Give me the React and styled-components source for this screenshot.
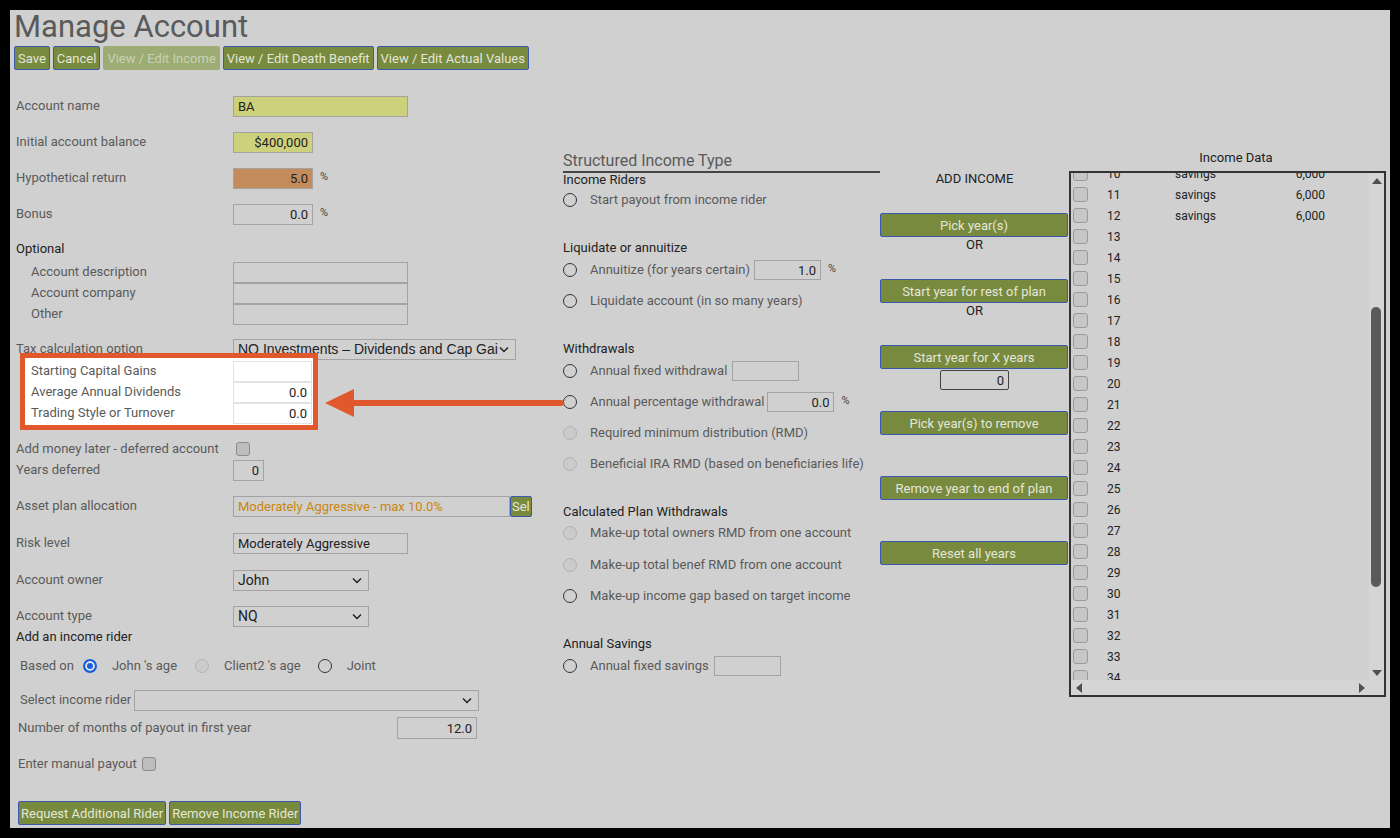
import React from 'react';
import styled, { createGlobalStyle } from 'styled-components';

const GlobalStyle = createGlobalStyle`
  html, body {
    margin: 0;
    padding: 0;
    background: #000;
  }
  body {
    font-family: Roboto, "Noto Sans", sans-serif;
  }
`;

const Page = styled.div`
  position: relative;
  box-sizing: border-box;
  margin: 10px;
  width: 1380px;
  height: 818px;
  padding: 0 0 0 4px;
  background: #d0d0d0;
  color: #5a5a5a;
  font-size: 13px;
`;

const Title = styled.h1`
  margin: 0;
  font-size: 31px;
  line-height: 34px;
  font-weight: 400;
  color: #5a5a5a;
`;

const Toolbar = styled.div`
  display: flex;
  gap: 3px;
  margin-top: 2px;
  height: 24px;
`;

const Button = styled.button`
  box-sizing: border-box;
  height: 24px;
  padding: 0 3px;
  border: 1.5px solid ${(p) => (p.disabled ? 'transparent' : '#3b58ad')};
  border-radius: 2px;
  background: ${(p) => (p.disabled ? '#9dac74' : '#788a3e')};
  color: ${(p) => (p.disabled ? '#c9d1b3' : '#e4e6da')};
  font-family: Roboto, sans-serif;
  font-size: 13px;
  white-space: nowrap;
  cursor: pointer;
`;

const SelButton = styled(Button)`
  height: 21px;
  padding: 0 1px;
`;

const Columns = styled.div`
  display: flex;
  margin: 28px 0 0 2px;
`;

const LeftCol = styled.div`
  width: 547px;
  flex-shrink: 0;
`;

const MidCol = styled.div`
  width: 317px;
  flex-shrink: 0;
  padding-top: 53px;
`;

const ActionCol = styled.div`
  width: 189px;
  flex-shrink: 0;
  padding-top: 73px;
  display: flex;
  flex-direction: column;
  align-items: center;
  color: #222;
`;

const DataCol = styled.div`
  width: 317px;
  flex-shrink: 0;
  padding-top: 52px;
`;

/* one text line of the form; the gap is the distance to the next line */
const Line = styled.div`
  display: flex;
  align-items: center;
  height: 16px;
  line-height: 16px;
  margin-bottom: ${(p) => p.$gap ?? 20}px;
  padding-left: ${(p) => p.$pad ?? 0}px;
  white-space: nowrap;
`;

const Label = styled.span`
  flex-shrink: 0;
  width: ${(p) => (p.$w ? `${p.$w}px` : 'auto')};
  padding-left: ${(p) => (p.$indent ? 15 : 0)}px;
  box-sizing: border-box;
  margin-right: ${(p) => p.$mr ?? 0}px;
  color: ${(p) => (p.$dark ? '#222' : '#5a5a5a')};
`;

const TextBox = styled.input`
  box-sizing: border-box;
  flex-shrink: 0;
  width: ${(p) => p.$w}px;
  height: ${(p) => p.$h ?? 21}px;
  margin-left: ${(p) => p.$ml ?? 0}px;
  padding: 0 4px;
  border: 1px solid ${(p) => p.$border ?? '#a3a3a3'};
  border-radius: ${(p) => (p.$round ? 2 : 0)}px;
  background: ${(p) => p.$bg ?? 'transparent'};
  color: ${(p) => p.$color ?? '#222'};
  font-family: Roboto, sans-serif;
  font-size: 13px;
  text-align: ${(p) => p.$align ?? 'left'};
  outline: none;
`;

const Pct = styled.span`
  align-self: flex-start;
  margin: -1px 0 0 7px;
  font-size: 11px;
  color: #444;
`;

const SelectBox = styled.div`
  box-sizing: border-box;
  display: flex;
  align-items: center;
  flex-shrink: 0;
  width: ${(p) => p.$w}px;
  height: 21px;
  margin-left: ${(p) => p.$ml ?? 0}px;
  padding: 0 6px 0 4px;
  border: 1px solid #a3a3a3;
  color: #222;
  font-family: ${(p) => (p.$arial ? '"Liberation Sans", Arial, sans-serif' : 'Roboto, sans-serif')};
  font-size: 14px;
`;

const SelectText = styled.span`
  flex: 1;
  white-space: nowrap;
`;

const Chevron = () => (
  <svg width="10" height="7" viewBox="0 0 10 7">
    <path d="M1 1.5 L5 5.5 L9 1.5" fill="none" stroke="#222" strokeWidth="1.5" />
  </svg>
);

const Check = styled.span`
  box-sizing: border-box;
  display: inline-block;
  flex-shrink: 0;
  width: 14px;
  height: 14px;
  margin-left: ${(p) => p.$ml ?? 0}px;
  border: 1px solid #8a8a8a;
  border-radius: 3px;
  background: #bdbdbd;
`;

const Radio = styled.span`
  box-sizing: border-box;
  display: inline-block;
  flex-shrink: 0;
  width: 14px;
  height: 14px;
  margin-right: ${(p) => p.$mr ?? 13}px;
  border-radius: 50%;
  border: ${(p) =>
    p.$checked ? '2px solid #1a5ee0' : p.$off ? '1px solid #b3b3b3' : '1.5px solid #333'};
  background: ${(p) => (p.$checked ? '#1a5ee0' : p.$off ? '#cbcbcb' : 'transparent')};
  box-shadow: ${(p) => (p.$checked ? 'inset 0 0 0 2px #e6e6e6' : 'none')};
`;

const Highlight = styled.div`
  position: relative;
  box-sizing: border-box;
  width: 298px;
  margin: 0 0 11px 4px;
  padding: 5px 1px 4px 6px;
  border: 5px solid #e0582b;
  background: #fff;
`;

const HighlightLine = styled(Line)`
  &:last-child {
    margin-bottom: 0;
  }
`;

const OptionText = styled.span`
  margin-right: ${(p) => p.$mr ?? 0}px;
  color: #5a5a5a;
`;

const BottomBar = styled.div`
  display: flex;
  gap: 3px;
  padding-left: 2px;
`;

const BottomButton = styled(Button)`
  padding: 0 2px;
`;

const SectionTitle = styled.div`
  font-size: 16px;
  line-height: 20px;
  color: #5a5a5a;
  border-bottom: 2px solid #444;
  margin-bottom: -1px;
`;

const ActionText = styled.div`
  line-height: 16px;
  margin-bottom: ${(p) => p.$gap ?? 0}px;
`;

const ActionButton = styled(Button)`
  width: 188px;
  align-self: flex-start;
  margin-bottom: ${(p) => p.$gap ?? 0}px;
`;

const YearsBox = styled(TextBox)`
  margin-bottom: 21px;
`;

const DataTitle = styled.div`
  line-height: 16px;
  margin-bottom: 5px;
  padding-left: 17px;
  text-align: center;
  color: #222;
`;

const DataBox = styled.div`
  box-sizing: border-box;
  display: grid;
  grid-template-columns: 1fr 15px;
  grid-template-rows: 1fr 15px;
  height: 526px;
  border: 2px solid #333;
`;

const Viewport = styled.div`
  overflow: hidden;
`;

const RowList = styled.div`
  margin-top: -10px;
`;

const DataRow = styled.div`
  display: grid;
  grid-template-columns: 36px 68px 90px 60px;
  align-items: center;
  height: 21px;
  font-size: 12px;
  color: #222;
`;

const RowCheck = styled(Check)`
  width: 15px;
  height: 15px;
  margin-left: 2px;
  border-color: #9a9a9a;
  background: #c6c6c6;
`;

const Amount = styled.span`
  text-align: right;
`;

const VScroll = styled.div`
  display: flex;
  flex-direction: column;
  background: #d5d5d5;
`;

const HScroll = styled.div`
  display: flex;
  background: #d5d5d5;
`;

const Corner = styled.div`
  background: #d5d5d5;
`;

const ScrollArrow = styled.div`
  display: flex;
  align-items: center;
  justify-content: center;
  width: 15px;
  height: 15px;
  flex-shrink: 0;
`;

const Track = styled.div`
  flex: 1;
`;

const Thumb = styled.div`
  width: 10px;
  height: ${(p) => p.$len}px;
  margin: ${(p) => p.$at}px 0 0 2px;
  border-radius: 5px;
  background: #5a5a5a;
`;

const Tri = ({ dir }) => {
  const pts = {
    up: '0,7 5,1 10,7',
    down: '0,1 5,7 10,1',
    left: '7,0 1,5 7,10',
    right: '1,0 7,5 1,10',
  }[dir];
  const vertical = dir === 'up' || dir === 'down';
  return (
    <svg width={vertical ? 10 : 8} height={vertical ? 8 : 10} viewBox={vertical ? '0 0 10 8' : '0 0 8 10'}>
      <polygon points={pts} fill="#505050" />
    </svg>
  );
};

const Arrow = styled.svg`
  position: absolute;
  left: 315px;
  top: 368px;
`;

const incomeRows = Array.from({ length: 26 }, (_, i) => {
  const year = 10 + i;
  return { year, kind: year <= 12 ? 'savings' : '', amount: year <= 12 ? '6,000' : '' };
});

const App = () => {
  return (
    <>
      <GlobalStyle />
      <Page>
        <Title>Manage Account</Title>
        <Toolbar>
          <Button>Save</Button>
          <Button>Cancel</Button>
          <Button disabled>View / Edit Income</Button>
          <Button>View / Edit Death Benefit</Button>
          <Button>View / Edit Actual Values</Button>
        </Toolbar>

        <Columns>
          <LeftCol>
            <Line $gap={20}>
              <Label $w={217}>Account name</Label>
              <TextBox $w={175} $bg="#cdd17b" defaultValue="BA" readOnly />
            </Line>
            <Line $gap={20}>
              <Label $w={217}>Initial account balance</Label>
              <TextBox $w={80} $bg="#cdd17b" $align="right" defaultValue="$400,000" readOnly />
            </Line>
            <Line $gap={20}>
              <Label $w={217}>Hypothetical return</Label>
              <TextBox $w={80} $bg="#c48b5b" $align="right" defaultValue="5.0" readOnly />
              <Pct>%</Pct>
            </Line>
            <Line $gap={19}>
              <Label $w={217}>Bonus</Label>
              <TextBox $w={80} $align="right" defaultValue="0.0" readOnly />
              <Pct>%</Pct>
            </Line>
            <Line $gap={7}>
              <Label $dark>Optional</Label>
            </Line>
            <Line $gap={5}>
              <Label $w={217} $indent>Account description</Label>
              <TextBox $w={175} readOnly />
            </Line>
            <Line $gap={5}>
              <Label $w={217} $indent>Account company</Label>
              <TextBox $w={175} readOnly />
            </Line>
            <Line $gap={19}>
              <Label $w={217} $indent>Other</Label>
              <TextBox $w={175} readOnly />
            </Line>
            <Line $gap={-4}>
              <Label $w={217}>Tax calculation option</Label>
              <SelectBox $w={283} $arial>
                <SelectText>NQ Investments – Dividends and Cap Gai</SelectText>
                <Chevron />
              </SelectBox>
            </Line>
            <Highlight>
              <HighlightLine $gap={5}>
                <Label $w={202}>Starting Capital Gains</Label>
                <TextBox $w={79} $bg="#fff" $border="#e2e2e2" readOnly />
              </HighlightLine>
              <HighlightLine $gap={5}>
                <Label $w={202}>Average Annual Dividends</Label>
                <TextBox $w={79} $bg="#fff" $border="#e2e2e2" $align="right" defaultValue="0.0" readOnly />
              </HighlightLine>
              <HighlightLine>
                <Label $w={202}>Trading Style or Turnover</Label>
                <TextBox $w={79} $bg="#fff" $border="#e2e2e2" $align="right" defaultValue="0.0" readOnly />
              </HighlightLine>
            </Highlight>
            <Line $gap={5}>
              <Label $w={220}>Add money later - deferred account</Label>
              <Check />
            </Line>
            <Line $gap={20}>
              <Label $w={217}>Years deferred</Label>
              <TextBox $w={31} $align="right" defaultValue="0" readOnly />
            </Line>
            <Line $gap={21}>
              <Label $w={217}>Asset plan allocation</Label>
              <TextBox $w={277} $color="#c9870d" defaultValue="Moderately Aggressive - max 10.0%" readOnly />
              <SelButton>Sel</SelButton>
            </Line>
            <Line $gap={21}>
              <Label $w={217}>Risk level</Label>
              <TextBox $w={175} defaultValue="Moderately Aggressive" readOnly />
            </Line>
            <Line $gap={20}>
              <Label $w={217}>Account owner</Label>
              <SelectBox $w={136}>
                <SelectText>John</SelectText>
                <Chevron />
              </SelectBox>
            </Line>
            <Line $gap={5}>
              <Label $w={217}>Account type</Label>
              <SelectBox $w={136}>
                <SelectText>NQ</SelectText>
                <Chevron />
              </SelectBox>
            </Line>
            <Line $gap={13}>
              <Label $dark>Add an income rider</Label>
            </Line>
            <Line $gap={18} $pad={4}>
              <OptionText $mr={9}>Based on</OptionText>
              <Radio $checked $mr={15} />
              <OptionText $mr={18}>John 's age</OptionText>
              <Radio $off $mr={15} />
              <OptionText $mr={17}>Client2 's age</OptionText>
              <Radio $mr={15} />
              <OptionText>Joint</OptionText>
            </Line>
            <Line $gap={12} $pad={4}>
              <OptionText>Select income rider</OptionText>
              <SelectBox $w={345} $ml={3}>
                <SelectText />
                <Chevron />
              </SelectBox>
            </Line>
            <Line $gap={20} $pad={2}>
              <Label $w={379}>Number of months of payout in first year</Label>
              <TextBox $w={80} $h={22} $align="right" defaultValue="12.0" readOnly />
            </Line>
            <Line $gap={29} $pad={2}>
              <OptionText>Enter manual payout</OptionText>
              <Check $ml={5} />
            </Line>
            <BottomBar>
              <BottomButton>Request Additional Rider</BottomButton>
              <BottomButton>Remove Income Rider</BottomButton>
            </BottomBar>
          </LeftCol>

          <MidCol>
            <SectionTitle>Structured Income Type</SectionTitle>
            <Line $gap={4}>
              <Label $dark>Income Riders</Label>
            </Line>
            <Line $gap={32}>
              <Radio />
              <OptionText>Start payout from income rider</OptionText>
            </Line>
            <Line $gap={6}>
              <Label $dark>Liquidate or annuitize</Label>
            </Line>
            <Line $gap={15}>
              <Radio />
              <OptionText>Annuitize (for years certain)</OptionText>
              <TextBox $w={67} $h={20} $ml={4} $align="right" defaultValue="1.0" readOnly />
              <Pct>%</Pct>
            </Line>
            <Line $gap={32}>
              <Radio />
              <OptionText>Liquidate account (in so many years)</OptionText>
            </Line>
            <Line $gap={6}>
              <Label $dark>Withdrawals</Label>
            </Line>
            <Line $gap={15}>
              <Radio />
              <OptionText>Annual fixed withdrawal</OptionText>
              <TextBox $w={67} $h={20} $ml={5} readOnly />
            </Line>
            <Line $gap={15}>
              <Radio />
              <OptionText>Annual percentage withdrawal</OptionText>
              <TextBox $w={67} $h={20} $ml={3} $align="right" defaultValue="0.0" readOnly />
              <Pct>%</Pct>
            </Line>
            <Line $gap={15}>
              <Radio $off />
              <OptionText>Required minimum distribution (RMD)</OptionText>
            </Line>
            <Line $gap={32}>
              <Radio $off />
              <OptionText>Beneficial IRA RMD (based on beneficiaries life)</OptionText>
            </Line>
            <Line $gap={5}>
              <Label $dark>Calculated Plan Withdrawals</Label>
            </Line>
            <Line $gap={16}>
              <Radio $off />
              <OptionText>Make-up total owners RMD from one account</OptionText>
            </Line>
            <Line $gap={15}>
              <Radio $off />
              <OptionText>Make-up total benef RMD from one account</OptionText>
            </Line>
            <Line $gap={32}>
              <Radio />
              <OptionText>Make-up income gap based on target income</OptionText>
            </Line>
            <Line $gap={6}>
              <Label $dark>Annual Savings</Label>
            </Line>
            <Line>
              <Radio />
              <OptionText>Annual fixed savings</OptionText>
              <TextBox $w={67} $h={20} $ml={5} readOnly />
            </Line>
          </MidCol>

          <ActionCol>
            <ActionText $gap={26}>ADD INCOME</ActionText>
            <ActionButton>Pick year(s)</ActionButton>
            <ActionText $gap={26}>OR</ActionText>
            <ActionButton>Start year for rest of plan</ActionButton>
            <ActionText $gap={26}>OR</ActionText>
            <ActionButton $gap={1}>Start year for X years</ActionButton>
            <YearsBox $w={69} $h={20} $border="#444" $round $align="right" defaultValue="0" readOnly />
            <ActionButton $gap={41}>Pick year(s) to remove</ActionButton>
            <ActionButton $gap={41}>Remove year to end of plan</ActionButton>
            <ActionButton>Reset all years</ActionButton>
          </ActionCol>

          <DataCol>
            <DataTitle>Income Data</DataTitle>
            <DataBox>
              <Viewport>
                <RowList>
                  {incomeRows.map((r) => (
                    <DataRow key={r.year}>
                      <RowCheck />
                      <span>{r.year}</span>
                      <span>{r.kind}</span>
                      <Amount>{r.amount}</Amount>
                    </DataRow>
                  ))}
                </RowList>
              </Viewport>
              <VScroll>
                <ScrollArrow><Tri dir="up" /></ScrollArrow>
                <Track>
                  <Thumb $at={119} $len={280} />
                </Track>
                <ScrollArrow><Tri dir="down" /></ScrollArrow>
              </VScroll>
              <HScroll>
                <ScrollArrow><Tri dir="left" /></ScrollArrow>
                <Track />
                <ScrollArrow><Tri dir="right" /></ScrollArrow>
              </HScroll>
              <Corner />
            </DataBox>
          </DataCol>
        </Columns>

        <Arrow width="240" height="50" viewBox="0 0 240 50">
          <polygon points="0,25 29,11 29,39" fill="#e0582b" />
          <line x1="26" y1="25" x2="236" y2="25" stroke="#e0582b" strokeWidth="6" strokeLinecap="round" />
        </Arrow>
      </Page>
    </>
  );
};

export default App;
